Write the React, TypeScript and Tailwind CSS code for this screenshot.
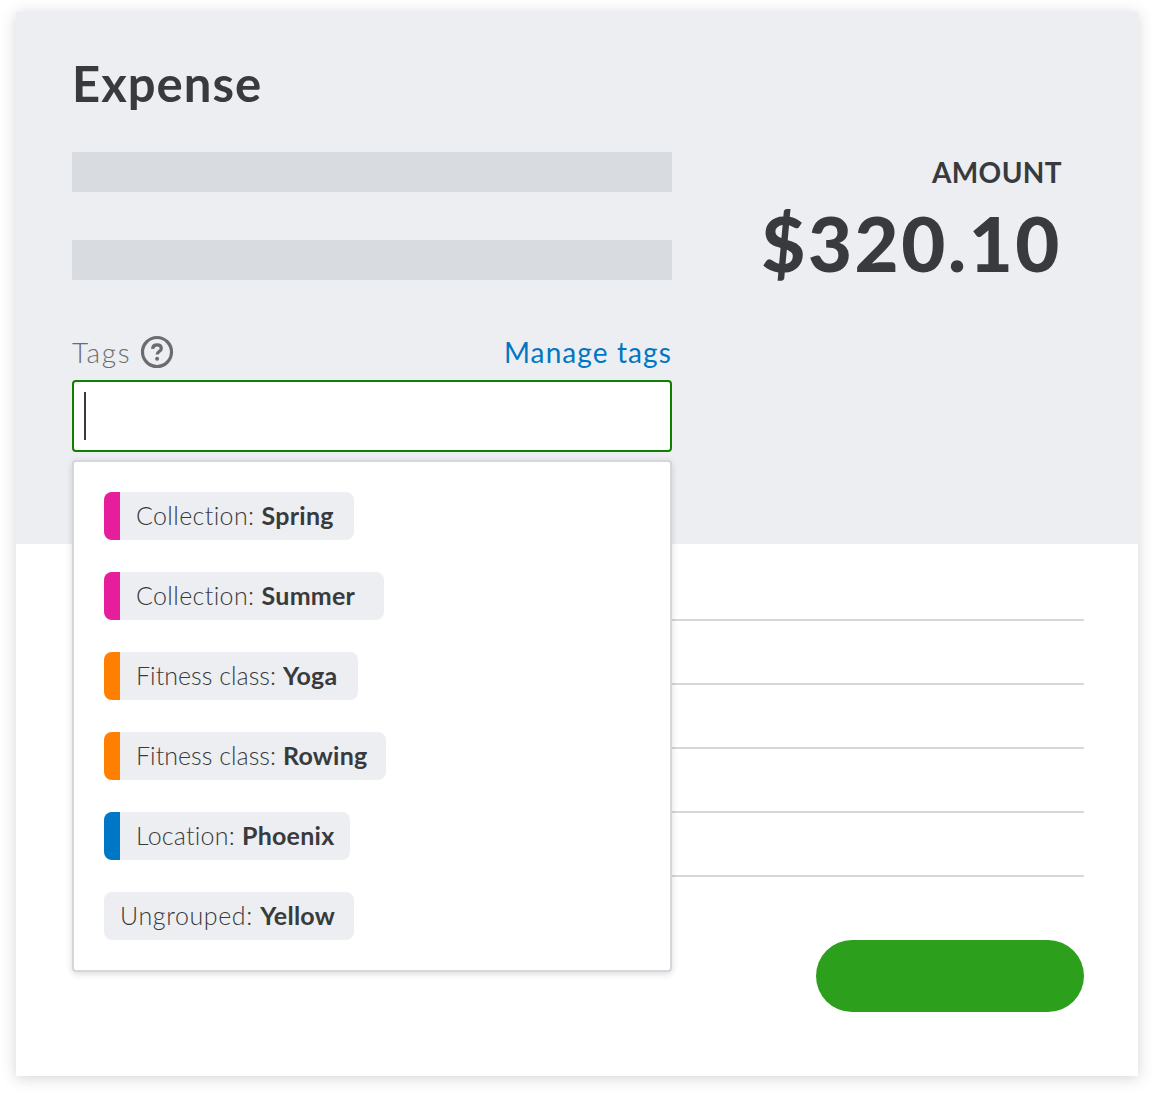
const font = "font-['Lato','Noto_Sans',sans-serif]";

const tags = [
  { group: 'Collection', name: 'Spring', color: 'bg-[#e61e9b]', width: 'w-[250px]', spacing: 'tracking-[0.37px]' },
  { group: 'Collection', name: 'Summer', color: 'bg-[#e61e9b]', width: 'w-[280px]', spacing: 'tracking-[0.37px]' },
  { group: 'Fitness class', name: 'Yoga', color: 'bg-[#ff8000]', width: 'w-[254px]', spacing: 'tracking-[0.03px]' },
  { group: 'Fitness class', name: 'Rowing', color: 'bg-[#ff8000]', width: 'w-[282px]', spacing: 'tracking-[0.03px]' },
  { group: 'Location', name: 'Phoenix', color: 'bg-[#0077c5]', width: 'w-[246px]', spacing: 'tracking-[0.22px]' },
  { group: 'Ungrouped', name: 'Yellow', color: '', width: 'w-[250px]', spacing: 'tracking-[0.6px]' },
];

type TagChipProps = { group: string; name: string; color: string; width: string; spacing: string };

function TagChip({ group, name, color, width, spacing }: TagChipProps) {
  return (
    <div className={`flex h-12 items-center overflow-hidden rounded-lg bg-[#eceef1] ${width}`}>
      {color && <div className={`h-full w-4 shrink-0 ${color}`} />}
      <span className={`whitespace-nowrap pb-[2px] pl-4 text-[25px] font-light leading-none text-[#393a3d] ${spacing}`}>
        {group}: <span className="font-bold tracking-[0.25px]">{name}</span>
      </span>
    </div>
  );
}

function HelpIcon() {
  return (
    <svg width="34" height="34" viewBox="0 0 34 34" fill="none" className="ml-[9px]">
      <circle cx="17" cy="17" r="14.5" stroke="#6b6c72" strokeWidth="3.2" />
      <path d="M12.6 13.8c.2-2.6 2-4 4.4-4 2.5 0 4.3 1.4 4.3 3.6 0 3-4.2 3.2-4.2 6" stroke="#6b6c72" strokeWidth="3.2" />
      <circle cx="17.1" cy="23.8" r="2" fill="#6b6c72" />
    </svg>
  );
}

export default function App() {
  return (
    <div className={`h-[1096px] w-[1154px] bg-white pl-4 pr-4 pt-3 ${font}`}>
      <div className="relative h-[1064px] w-[1122px] bg-white shadow-[0_2px_14px_rgba(57,58,61,0.22)]">
        <div className="flex h-[532px] justify-between bg-[#eceef1] pl-14 pr-[76px]">
          <div className="w-[600px]">
            <h1 className="mt-[41px] h-[60px] text-[49px] font-bold leading-[60px] tracking-[1px] text-[#393a3d]">Expense</h1>
            <div className="mt-[39px] h-10 bg-[#d8dbdf]" />
            <div className="mt-12 h-10 bg-[#d8dbdf]" />
            <div className="mt-[54px] flex h-9 items-center justify-between">
              <div className="flex items-center">
                <span className="text-[28px] font-light leading-none tracking-[1.7px] text-[#6b6c72]">Tags</span>
                <HelpIcon />
              </div>
              <span className="text-[28px] leading-none tracking-[1.1px] text-[#0077c5]">Manage tags</span>
            </div>
            <div className="mt-[10px] flex h-[72px] items-center rounded-[4px] border-2 border-[#108000] bg-white pl-[10px]">
              <div className="h-12 w-[2px] bg-[#393a3d]" />
            </div>
          </div>
          <div className="pt-[142px] text-right text-[#393a3d]">
            <div className="text-[28px] font-bold leading-9 tracking-[0.4px]">AMOUNT</div>
            <div className="mt-[13px] text-[76px] font-black leading-[80px] tracking-[2.6px]">$320.10</div>
          </div>
        </div>

        <div className="pl-14 pr-[54px] pt-[13px]">
          {[0, 1, 2, 3, 4].map((row) => (
            <div key={row} className="h-16 border-b-2 border-[#d4d7dc]" />
          ))}
          <div className="mt-[63px] flex justify-end">
            <div className="h-[72px] w-[268px] rounded-full bg-[#2ca01c]" />
          </div>
        </div>

        <div className="absolute left-14 top-[448px] flex h-[512px] w-[600px] flex-col gap-8 rounded-[4px] border-2 border-[#d4d7dc] bg-white pl-[30px] pt-[30px] shadow-[0_2px_6px_rgba(57,58,61,0.18)]">
          {tags.map((tag) => (
            <TagChip key={tag.name} {...tag} />
          ))}
        </div>
      </div>
    </div>
  );
}
